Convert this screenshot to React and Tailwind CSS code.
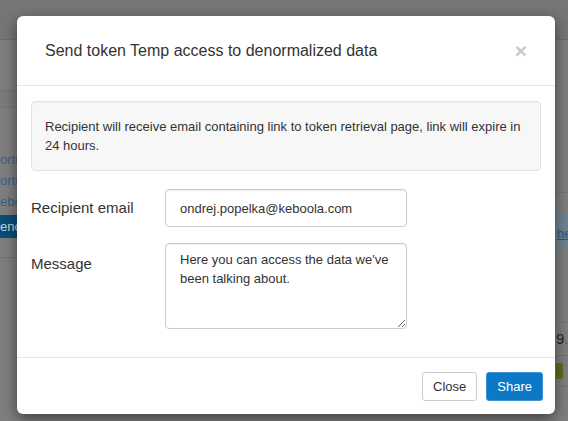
import { useState } from "react";

const font = "font-['Liberation_Sans',Arial,Helvetica,sans-serif]";

function BackgroundPage() {
  return (
    <div className="flex h-full flex-col">
      <div className="h-[40px] shrink-0 border-b border-[#6c6c6c] bg-[#767676]" />
      <div className="flex flex-1">
        <div className="w-[17px] overflow-hidden whitespace-nowrap text-[13px]">
          <div className="h-[50px]" />
          <div className="h-[18px] border-y border-[#747474] bg-[#7b7b7b]" />
          <div className="pt-[41px]">
            <div className="h-[21px] leading-[21px] text-[#35628c]">ortu</div>
            <div className="h-[21px] leading-[21px] text-[#35628c]">ortu</div>
            <div className="h-[21px] leading-[21px] text-[#35628c]">ebo</div>
            <div className="mt-[3px] h-[23px] bg-[#0c4d75] leading-[23px] text-[#c5d3de]">eno</div>
            <div className="mt-[19px] border-t border-[#747474]" />
          </div>
        </div>
        <div className="flex-1" />
        <div className="w-[12px] overflow-hidden whitespace-nowrap text-[13px]">
          <div className="h-[153px] border-b border-[#747474]" />
          <div className="mt-[20px] flex h-[35px] items-end bg-[#6f8391] pb-[5px] pl-[1px]">
            <span className="text-[#2a5a86] underline">hea</span>
          </div>
          <div className="h-[75px] border-b border-[#747474]" />
          <div className="flex h-[33px] items-center border-b border-[#747474] text-[15px] text-[#262626]">
            9<span className="text-[#6b5a1c]">.</span>
          </div>
          <div className="pt-[7px] pb-[7px] border-b border-[#747474]">
            <div className="h-[16px] w-[7px] rounded-[2px] bg-[#58701c]" />
          </div>
        </div>
      </div>
    </div>
  );
}

export default function App() {
  const [email, setEmail] = useState("ondrej.popelka@keboola.com");
  const [message, setMessage] = useState("Here you can access the data we've been talking about.");

  return (
    <div className={`relative h-[421px] w-[568px] overflow-hidden bg-[#7f7f7f] text-[#333] ${font}`}>
      <BackgroundPage />

      <div className="absolute left-[17px] top-[16px] w-[538px] rounded-[6px] bg-white shadow-[0_5px_15px_rgba(0,0,0,0.5)]">
        <div className="flex h-[70px] items-center justify-between border-b border-[#e5e5e5] px-[28px]">
          <h4 className="text-[16px] leading-[22px] text-[#333]">Send token Temp access to denormalized data</h4>
          <button className="text-[21px] font-bold leading-none text-[#c8c8c8]">×</button>
        </div>

        <div className="px-[14px] pt-[15px] pb-[28px]">
          <div className="mb-[18px] rounded-[4px] border border-[#e3e3e3] bg-[#f7f7f7] px-[13px] py-[15px] text-[13px] leading-[19px] shadow-[inset_0_1px_1px_rgba(0,0,0,0.03)]">
            Recipient will receive email containing link to token retrieval page, link will expire in 24 hours.
          </div>

          <div className="mb-[16px] flex items-center">
            <label className="w-[134px] text-[15px] text-[#333]">Recipient email</label>
            <input
              value={email}
              onChange={(e) => setEmail(e.target.value)}
              className="h-[38px] w-[242px] rounded-[4px] border border-[#ccc] px-[14px] text-[13px] text-[#333] outline-none shadow-[inset_0_1px_1px_rgba(0,0,0,0.075)]"
            />
          </div>

          <div className="flex items-start">
            <label className="w-[134px] pt-[10px] text-[15px] text-[#333]">Message</label>
            <textarea
              value={message}
              onChange={(e) => setMessage(e.target.value)}
              className="h-[86px] w-[242px] rounded-[4px] border border-[#ccc] px-[14px] py-[6px] text-[13px] leading-[19px] text-[#333] outline-none shadow-[inset_0_1px_1px_rgba(0,0,0,0.075)]"
            />
          </div>
        </div>

        <div className="flex justify-end gap-[9px] border-t border-[#e5e5e5] pl-[13px] pr-[12px] pt-[14px] pb-[13px]">
          <button className="h-[29px] rounded-[3px] border border-[#ccc] bg-white px-[10px] text-[13px] text-[#333]">
            Close
          </button>
          <button className="h-[29px] rounded-[3px] border border-[#3b90d8] bg-[#0b79c6] px-[10px] text-[13px] text-white">
            Share
          </button>
        </div>
      </div>
    </div>
  );
}
